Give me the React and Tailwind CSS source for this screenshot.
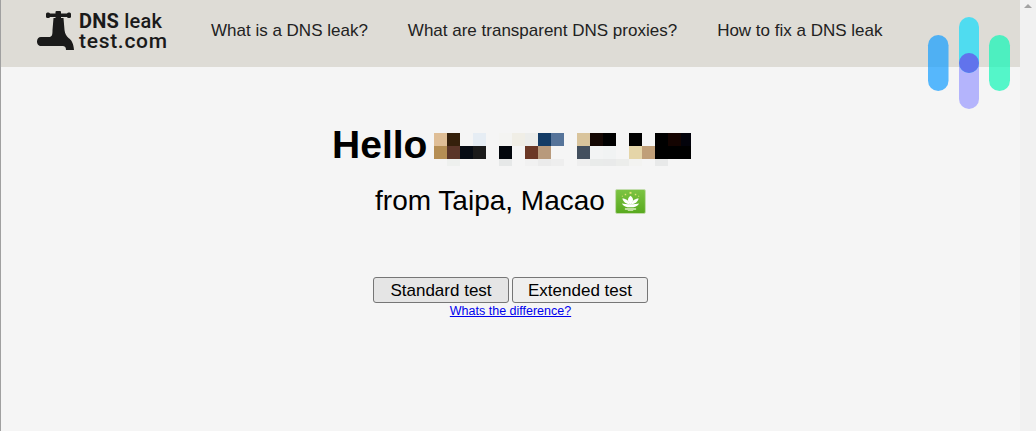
import React from 'react';

const navLinks = ['What is a DNS leak?', 'What are transparent DNS proxies?', 'How to fix a DNS leak'];

// pixelated name, one entry per mosaic cell, row by row
const mosaic = [
  'bg-[#dfbe96]', 'bg-[#35200b]', '', 'bg-[#e6edf4]', '', 'bg-[#f4f4f2]', 'bg-[#f0eee6]', 'bg-[#ecedeb]', 'bg-[#143c66]', 'bg-[#56749a]',
  '', 'bg-[#d9c49c]', 'bg-[#150804]', 'bg-[#000000]', '', 'bg-[#000000]', '', 'bg-[#000000]', 'bg-[#140401]', 'bg-[#03030b]',
  'bg-[#b58e54]', 'bg-[#5a3528]', 'bg-[#070c14]', 'bg-[#1a1a1a]', '', 'bg-[#02060c]', '', 'bg-[#6b3826]', 'bg-[#b89a7c]', '',
  '', 'bg-[#434f5e]', 'bg-[#f3f4f4]', 'bg-[#f1f3f3]', '', 'bg-[#e5d5a8]', 'bg-[#c09f78]', 'bg-[#000000]', 'bg-[#000000]', 'bg-[#000000]',
  '', 'bg-[#eef0ee]', '', '', '', 'bg-[#e6e8e8]', '', 'bg-[#f1f1f1]', 'bg-[#ebebeb]', 'bg-[#eeeeee]',
  '', 'bg-[#eeeeee]', 'bg-[#e9ebea]', 'bg-[#e9eaea]', 'bg-[#ecedeb]', 'bg-[#f3f3f1]', '', 'bg-[#e8e9e9]', '', '',
];

const TapIcon = () => (
  <svg width="37" height="40" viewBox="37 11 37 40" className="shrink-0">
    <g fill="#1a1a1a">
      <rect x="46" y="13.5" width="25" height="3.5" rx="1.75" />
      <rect x="46" y="12.5" width="4" height="5.5" rx="1.5" />
      <rect x="67" y="12.5" width="4" height="5.5" rx="1.5" />
      <rect x="55.5" y="11" width="5.5" height="8" rx="1" />
      <path d="M53.5 18H63.5L64.5 30C65 34 66.5 36 68.5 38C71.5 40 73.5 43 74 50H66C66 47 65 46 62 46H41C38 46 37 43.5 37 41.5C37 39 38.5 37 41 37H49C52 37 52.5 35 52.5 30Z" />
    </g>
  </svg>
);

const Flag = () => (
  <svg width="31" height="25" viewBox="0 0 32 26" className="shrink-0">
    <defs>
      <linearGradient id="macao" x1="0" y1="0" x2="0" y2="1">
        <stop offset="0" stopColor="#7cc443" />
        <stop offset="1" stopColor="#58a91e" />
      </linearGradient>
    </defs>
    <rect x="0.5" y="0.5" width="31" height="25" rx="1.5" fill="url(#macao)" stroke="#c4dcae" />
    <g fill="#e4e27a">
      <rect x="15" y="3" width="2" height="2" />
      <rect x="10" y="5" width="1.5" height="1.5" />
      <rect x="20.5" y="5" width="1.5" height="1.5" />
      <rect x="7" y="7" width="1" height="1" />
      <rect x="24" y="7" width="1" height="1" />
    </g>
    <g fill="#ffffff">
      <path d="M16 7C19.5 9.5 19.5 13 16 16C12.5 13 12.5 9.5 16 7Z" />
      <path d="M7.5 10C11.5 10 14.5 12.5 15.5 16C11.5 16 8.5 13.5 7.5 10Z" />
      <path d="M24.5 10C20.5 10 17.5 12.5 16.5 16C20.5 16 23.5 13.5 24.5 10Z" />
      <path d="M7 15C11 16 21 16 25 15C23.5 18 20.5 19 16 19C11.5 19 8.5 18 7 15Z" />
    </g>
    <g fill="#dff0c8">
      <rect x="10" y="20" width="12" height="1.5" rx="0.75" />
      <rect x="13" y="22" width="6" height="1" rx="0.5" />
    </g>
  </svg>
);

// brand mark that sits on top of the page corner
const BrandMark = () => (
  <svg width="84" height="94" viewBox="0 0 84 94" className="absolute left-[927px] top-[16px]">
    <rect x="1" y="19" width="20.5" height="56" rx="10.25" fill="#129dff" fillOpacity="0.7" />
    <rect x="62" y="19" width="21" height="56" rx="10.5" fill="#10f7b7" fillOpacity="0.7" />
    <rect x="32" y="37" width="20" height="56" rx="10" fill="#9898ff" fillOpacity="0.7" />
    <rect x="32" y="1" width="20" height="56" rx="10" fill="#12dcfb" fillOpacity="0.7" />
    <circle cx="42" cy="47" r="10" fill="#6173ec" />
  </svg>
);

const App = () => {
  return (
    <div className="relative flex h-[431px] w-[1036px] overflow-hidden bg-[#f5f5f5] font-['Liberation_Sans',Arial,sans-serif] text-black">
      <div className="flex min-w-0 flex-1 flex-col border-l border-[#a0a0a0]">
        {/* Header */}
        <header className="flex h-[67px] shrink-0 items-center bg-[#dedcd6] pb-[5px] pl-[36px]">
          <a href="#" className="flex w-[174px] shrink-0 items-center gap-[5px]">
            <TapIcon />
            <span className="flex flex-col font-['Roboto',sans-serif] text-[#1a1a1a]">
              <span className="text-[20px] leading-[20px] font-medium tracking-[0.2px]">
                <span className="font-bold">DNS</span> leak
              </span>
              <span className="text-[21px] leading-[20px] font-medium tracking-[0.7px]">test.com</span>
            </span>
          </a>
          <nav className="flex gap-[40px] text-[17px] text-[#222222]">
            {navLinks.map((link) => (
              <a key={link} href="#">
                {link}
              </a>
            ))}
          </nav>
        </header>

        {/* Greeting */}
        <main className="flex flex-col items-center pt-[55px]">
          <div className="flex items-start pl-[2px]">
            <h1 className="mr-[6.5px] text-[39px] leading-[46px] font-bold">Hello</h1>
            <div className="mt-[11px] grid grid-cols-[repeat(19,13px)_10px] grid-rows-[13px_13px_7px]">
              {mosaic.map((color, index) => (
                <div key={index} className={color} />
              ))}
            </div>
          </div>
          <div className="mt-[17px] flex h-[32px] items-center gap-[10px]">
            <p className="text-[28px] leading-[32px]">from Taipa, Macao</p>
            <Flag />
          </div>

          <div className="mt-[60px] flex gap-[3px]">
            <button className="h-[26px] w-[136px] rounded-[3px] border border-[#767676] bg-[#e5e5e5] pb-[2px] text-[17px]">
              Standard test
            </button>
            <button className="h-[26px] w-[136px] rounded-[3px] border border-[#767676] bg-[#efefef] pb-[2px] text-[17px]">
              Extended test
            </button>
          </div>
          <a href="#" className="text-[12.5px] leading-[16px] text-[#0000ee] underline">
            Whats the difference?
          </a>
        </main>
      </div>

      {/* Scrollbar */}
      <div className="flex w-[16px] shrink-0 flex-col items-center bg-[#f1f1f1] pt-[4px]">
        <div className="h-0 w-0 border-x-[4px] border-b-[4px] border-x-transparent border-b-[#a3a3a3]" />
      </div>

      <BrandMark />
    </div>
  );
};

export default App;
